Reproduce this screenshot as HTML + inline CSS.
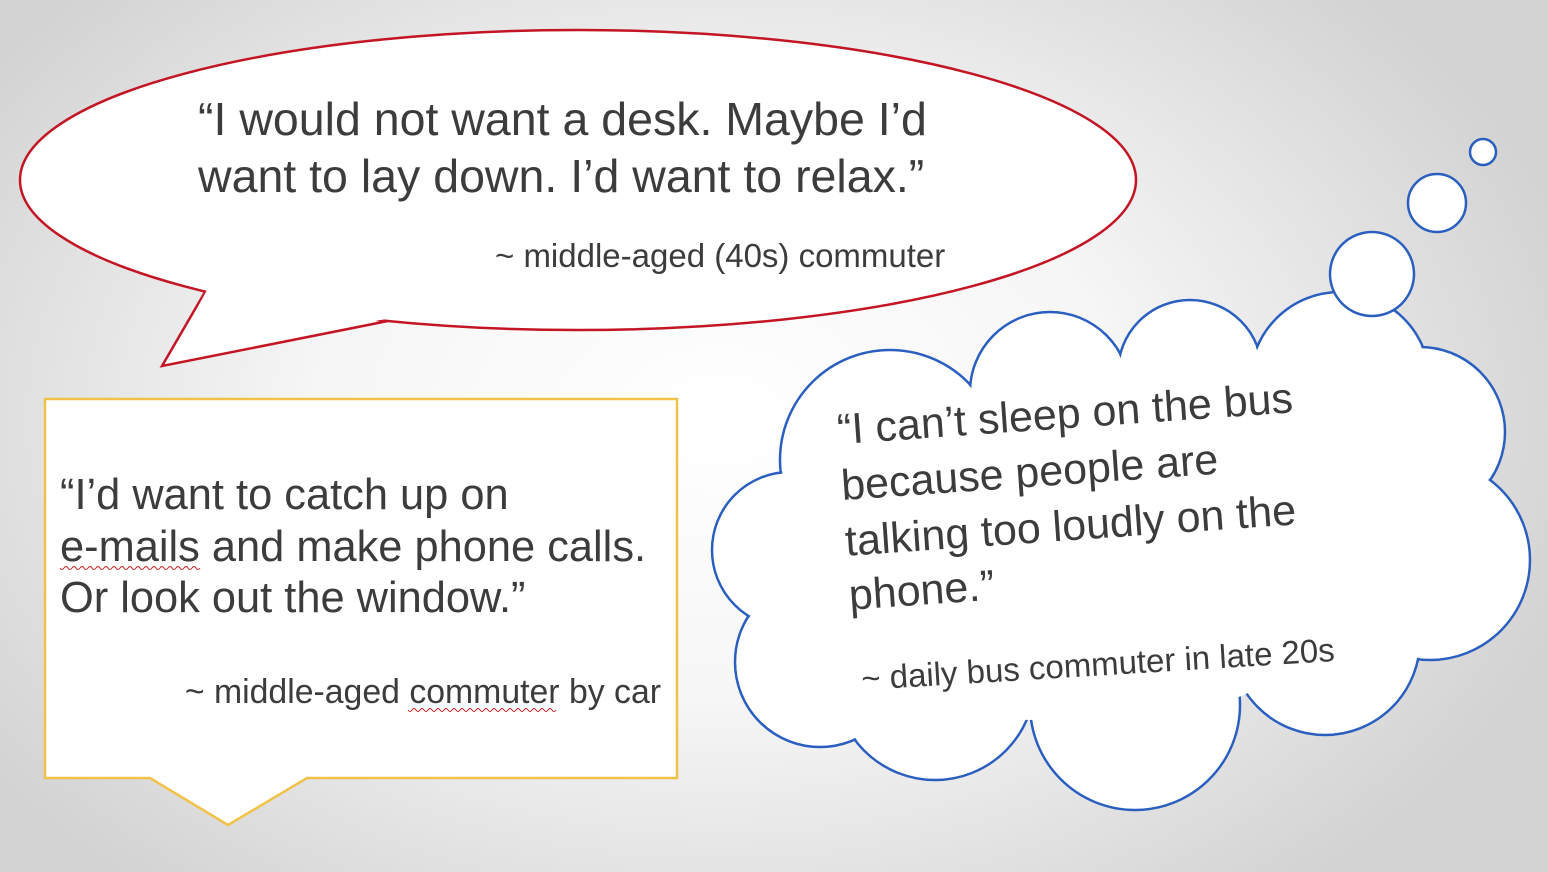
<!DOCTYPE html>
<html><head><meta charset="utf-8"><style>
html,body{margin:0;padding:0}
body{width:1548px;height:872px;overflow:hidden;background:radial-gradient(ellipse 900px 620px at 720px 420px,#ffffff 0%,#f6f6f6 45%,#d2d2d2 100%);font-family:"Liberation Sans",sans-serif}
svg{position:absolute;left:0;top:0}
text{font-family:"Liberation Sans",sans-serif;fill:#3c3c3c}
</style></head><body>
<svg width="1548" height="872" viewBox="0 0 1548 872">
<path d="M205,292 L162,366 L388,321 Z" fill="#fff" stroke="#c41525" stroke-width="2.5"/>
<ellipse cx="578" cy="180" rx="558" ry="150" fill="#fff" stroke="#c41525" stroke-width="2.5"/>
<path d="M207,290 L170,358 L392,318 Z" fill="#fff"/>
<text x="198" y="135" font-size="46.5">“I would not want a desk. Maybe I’d</text>
<text x="198" y="192" font-size="46.5">want to lay down. I’d want to relax.”</text>
<text x="495" y="267" font-size="33">~ middle-aged (40s) commuter</text>

<path d="M45,399 L677,399 L677,778 L307,778 L228,825 L150,778 L45,778 Z" fill="#fff" stroke="#f0c247" stroke-width="2.5"/>
<text x="60" y="509" font-size="43.4">“I’d want to catch up on</text>
<text x="60" y="561" font-size="43.4">e-mails and make phone calls.</text>
<text x="60" y="612" font-size="43.4">Or look out the window.”</text>
<text x="661" y="703" font-size="33.8" text-anchor="end">~ middle-aged commuter by car</text>
<path d="M60,568 q2,3 4,0 t4,0 t4,0 t4,0 t4,0 t4,0 t4,0 t4,0 t4,0 t4,0 t4,0 t4,0 t4,0 t4,0 t4,0 t4,0 t4,0 t4,0 t4,0 t4,0 t4,0 t4,0 t4,0 t4,0 t4,0 t4,0 t4,0 t4,0 t4,0 t4,0 t4,0 t4,0 t4,0 t4,0 t4,0" fill="none" stroke="#d02020" stroke-width="1"/>
<path d="M408,710 q2,3 4,0 t4,0 t4,0 t4,0 t4,0 t4,0 t4,0 t4,0 t4,0 t4,0 t4,0 t4,0 t4,0 t4,0 t4,0 t4,0 t4,0 t4,0 t4,0 t4,0 t4,0 t4,0 t4,0 t4,0 t4,0 t4,0 t4,0 t4,0 t4,0 t4,0 t4,0 t4,0 t4,0 t4,0 t4,0 t4,0 t4,0" fill="none" stroke="#d02020" stroke-width="1"/>

<g stroke="#2a5fc0" stroke-width="2.5" fill="#fff">
<circle cx="890" cy="460" r="110"/>
<circle cx="1050" cy="392" r="80"/>
<circle cx="1190" cy="372" r="72"/>
<circle cx="1340" cy="382" r="90"/>
<circle cx="1420" cy="432" r="85"/>
<circle cx="1430" cy="560" r="100"/>
<circle cx="1325" cy="640" r="95"/>
<circle cx="1135" cy="705" r="105"/>
<circle cx="935" cy="680" r="100"/>
<circle cx="820" cy="662" r="85"/>
<circle cx="790" cy="550" r="78"/>
</g>
<g fill="#fff">
<circle cx="890" cy="460" r="108.5"/>
<circle cx="1050" cy="392" r="78.5"/>
<circle cx="1190" cy="372" r="70.5"/>
<circle cx="1340" cy="382" r="88.5"/>
<circle cx="1420" cy="432" r="83.5"/>
<circle cx="1430" cy="560" r="98.5"/>
<circle cx="1325" cy="640" r="93.5"/>
<circle cx="1135" cy="705" r="103.5"/>
<circle cx="935" cy="680" r="98.5"/>
<circle cx="820" cy="662" r="83.5"/>
<circle cx="790" cy="550" r="76.5"/>
<polygon points="890,460 1050,392 1190,372 1340,382 1420,432 1430,560 1325,640 1135,705 935,680 820,662 790,550"/>
<circle cx="1220" cy="640" r="60"/>
<circle cx="1030" cy="660" r="60"/>
</g>
<g stroke="#2a5fc0" stroke-width="2.5" fill="#fff">
<circle cx="1372" cy="274" r="42"/>
<circle cx="1437" cy="203" r="29"/>
<circle cx="1483" cy="152" r="13"/>
</g>
<g transform="rotate(-4 840 440)">
<text x="838" y="444" font-size="43">“I can’t sleep on the bus</text>
<text x="838" y="500" font-size="43">because people are</text>
<text x="838" y="556" font-size="43">talking too loudly on the</text>
<text x="838" y="610" font-size="43">phone.”</text>
</g>
<text x="862" y="690" font-size="33" transform="rotate(-3.5 862 690)">~ daily bus commuter in late 20s</text>
</svg>
</body></html>
